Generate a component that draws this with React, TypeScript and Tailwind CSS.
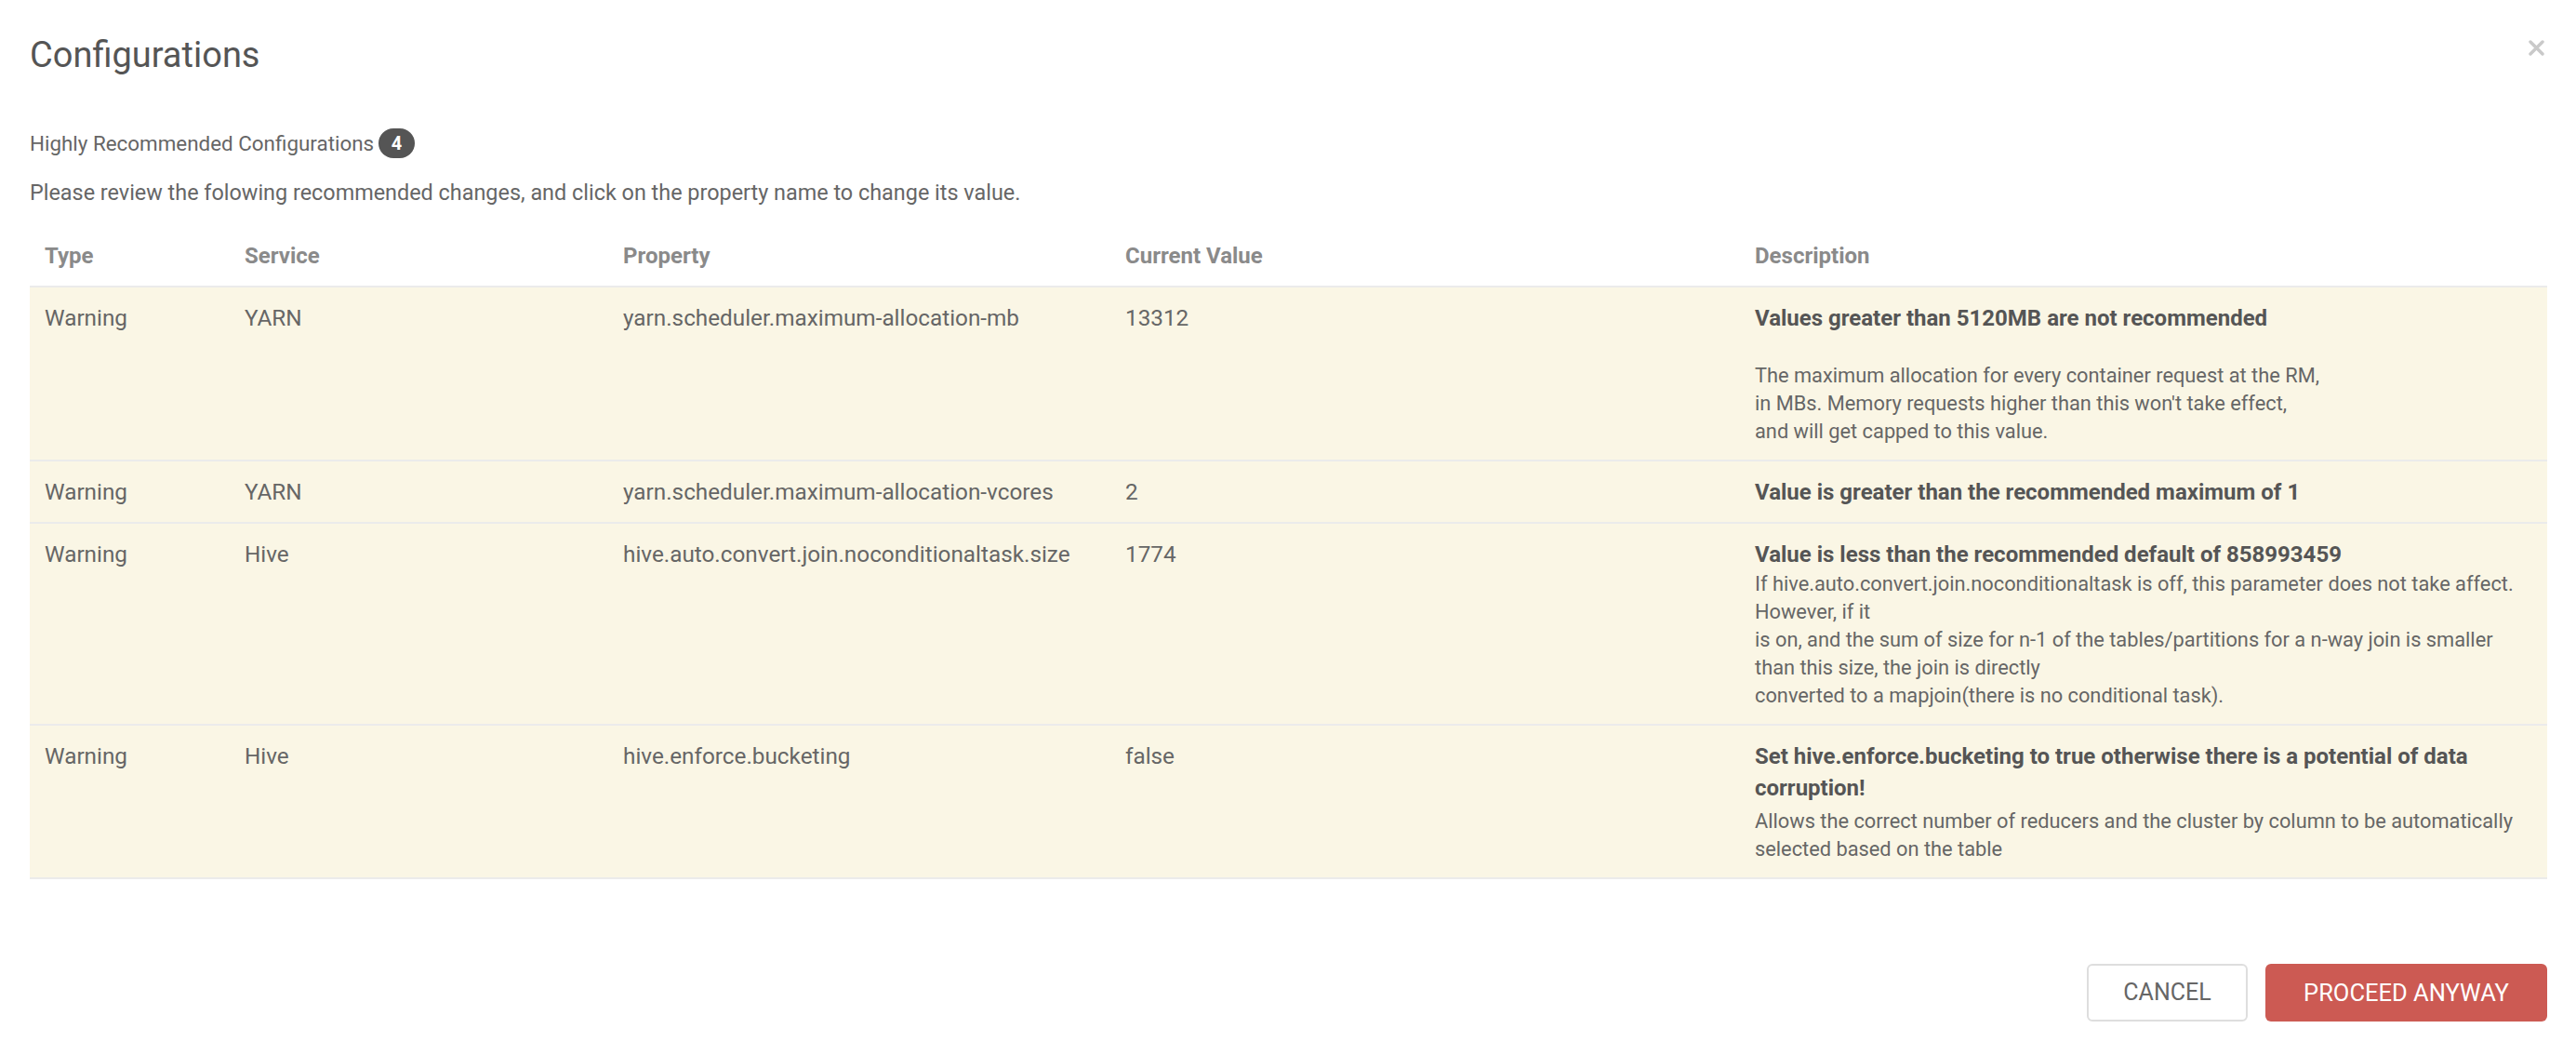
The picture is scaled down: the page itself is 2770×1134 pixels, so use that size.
import React from 'react';

interface Row {
  type: string;
  service: string;
  property: string;
  value: string;
  title: string[];
  description: string[];
  blankFirst?: boolean;
}

const ROWS: Row[] = [
  {
    type: 'Warning',
    service: 'YARN',
    property: 'yarn.scheduler.maximum-allocation-mb',
    value: '13312',
    title: ['Values greater than 5120MB are not recommended'],
    blankFirst: true,
    description: [
      'The maximum allocation for every container request at the RM,',
      "in MBs. Memory requests higher than this won't take effect,",
      'and will get capped to this value.',
    ],
  },
  {
    type: 'Warning',
    service: 'YARN',
    property: 'yarn.scheduler.maximum-allocation-vcores',
    value: '2',
    title: ['Value is greater than the recommended maximum of 1'],
    description: [],
  },
  {
    type: 'Warning',
    service: 'Hive',
    property: 'hive.auto.convert.join.noconditionaltask.size',
    value: '1774',
    title: ['Value is less than the recommended default of 858993459'],
    description: [
      'If hive.auto.convert.join.noconditionaltask is off, this parameter does not take affect.',
      'However, if it',
      'is on, and the sum of size for n-1 of the tables/partitions for a n-way join is smaller',
      'than this size, the join is directly',
      'converted to a mapjoin(there is no conditional task).',
    ],
  },
  {
    type: 'Warning',
    service: 'Hive',
    property: 'hive.enforce.bucketing',
    value: 'false',
    title: ['Set hive.enforce.bucketing to true otherwise there is a potential of data', 'corruption!'],
    description: [
      'Allows the correct number of reducers and the cluster by column to be automatically',
      'selected based on the table',
    ],
  },
];

const COLS = 'grid grid-cols-[215px_407px_540px_677px_1fr]';

const App: React.FC = () => {
  return (
    <div className="min-h-screen bg-white font-['Roboto',sans-serif] text-[#666]">
      <div className="flex items-start justify-between pl-[32px] pr-[34px] pt-[37px]">
        <h1 className="text-[38px] leading-[44px] font-normal text-[#555]">Configurations</h1>
        <button className="mt-[6px] p-0">
          <svg width="17" height="17" viewBox="0 0 17 17">
            <path d="M2 2L15 15M15 2L2 15" stroke="#c9c9c9" strokeWidth="3.4" strokeLinecap="round" />
          </svg>
        </button>
      </div>

      <div className="pl-[32px] pr-[31px]">
        <div className="mt-[57px] flex items-center gap-[5px]">
          <span className="text-[22.4px] leading-[32px] text-[#666]">Highly Recommended Configurations</span>
          <span className="flex h-[32px] min-w-[39px] items-center justify-center rounded-full bg-[#555] px-[10px] text-[20px] font-bold text-white">
            4
          </span>
        </div>
        <p className="mt-[21px] text-[23.4px] leading-[32px] text-[#666]">
          Please review the folowing recommended changes, and click on the property name to change its value.
        </p>

        <div className="mt-[21px]">
          <div className={`${COLS} text-[24px] leading-[34px] font-bold text-[#8a8a8a]`}>
            {['Type', 'Service', 'Property', 'Current Value', 'Description'].map((h) => (
              <div key={h} className="px-[16px] pt-[14px] pb-[15px]">
                {h}
              </div>
            ))}
          </div>

          {ROWS.map((row, i) => (
            <div
              key={row.property}
              className={`${COLS} border-t-2 border-[#ebebeb] bg-[#faf6e5] text-[24.3px] leading-[34px] ${
                i === ROWS.length - 1 ? 'border-b-2' : ''
              }`}
            >
              <div className="px-[16px] pt-[16px] pb-[15px]">{row.type}</div>
              <div className="px-[16px] pt-[16px] pb-[15px]">{row.service}</div>
              <div className="px-[16px] pt-[16px] pb-[15px]">{row.property}</div>
              <div className="px-[16px] pt-[16px] pb-[15px]">{row.value}</div>
              <div className="px-[16px] pt-[16px] pb-[15px]">
                {row.title.map((t) => (
                  <div key={t} className="whitespace-nowrap text-[24px] font-bold text-[#555]">
                    {t}
                  </div>
                ))}
                {row.blankFirst && <div className="h-[30px]" />}
                {row.description.length > 0 && (
                  <div className={`text-[21.8px] leading-[30px] text-[#666] ${row.title.length > 1 ? 'mt-[4px]' : ''}`}>
                    {row.description.map((d) => (
                      <div key={d} className="whitespace-nowrap">
                        {d}
                      </div>
                    ))}
                  </div>
                )}
              </div>
            </div>
          ))}
        </div>

        <div className="mt-[91px] flex justify-end gap-[19px]">
          <button className="h-[62px] w-[173px] rounded-[6px] border-2 border-[#dedede] bg-white text-[25px] text-[#666]">
            CANCEL
          </button>
          <button className="h-[62px] w-[303px] rounded-[6px] bg-[#cc5a53] text-[25.5px] text-white">
            PROCEED ANYWAY
          </button>
        </div>
      </div>
    </div>
  );
};

export default App;
